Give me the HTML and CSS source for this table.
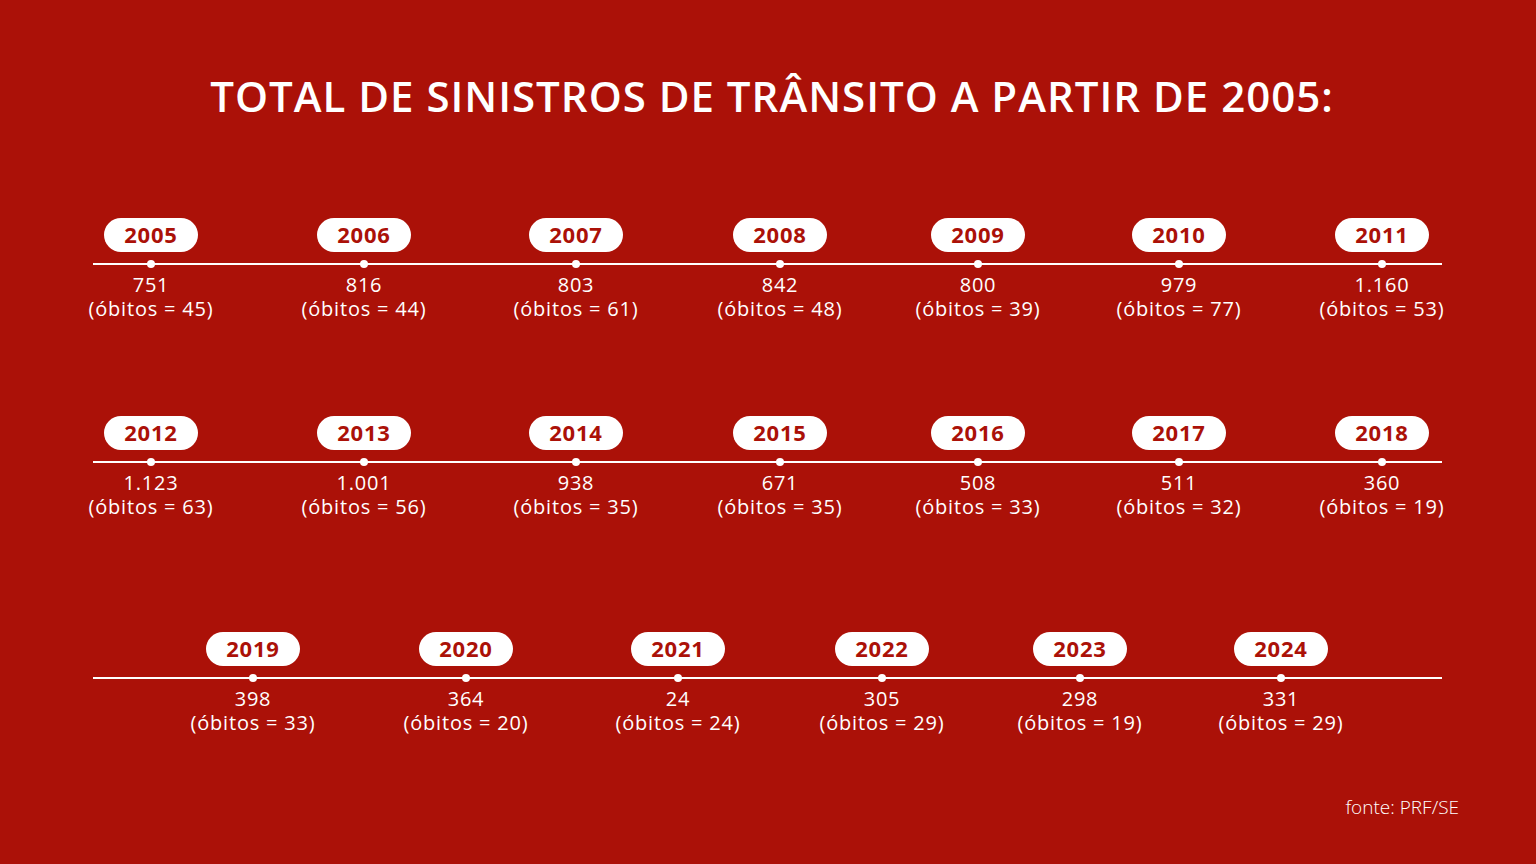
FILE: index.html
```html
<!DOCTYPE html>
<html lang="pt-BR">
<head>
<meta charset="utf-8">
<title>Total de sinistros de trânsito a partir de 2005</title>
<link rel="stylesheet" href="styles.css">
</head>
<body>
<main class="poster">
  <h1 class="title">TOTAL DE SINISTROS DE TRÂNSITO A PARTIR DE 2005:</h1>

  <section class="timeline row-a">
    <div class="item"><span class="pill">2005</span><span class="dot"></span><p class="val">751</p><p class="val">(óbitos = 45)</p></div>
    <div class="item"><span class="pill">2006</span><span class="dot"></span><p class="val">816</p><p class="val">(óbitos = 44)</p></div>
    <div class="item"><span class="pill">2007</span><span class="dot"></span><p class="val">803</p><p class="val">(óbitos = 61)</p></div>
    <div class="item"><span class="pill">2008</span><span class="dot"></span><p class="val">842</p><p class="val">(óbitos = 48)</p></div>
    <div class="item"><span class="pill">2009</span><span class="dot"></span><p class="val">800</p><p class="val">(óbitos = 39)</p></div>
    <div class="item"><span class="pill">2010</span><span class="dot"></span><p class="val">979</p><p class="val">(óbitos = 77)</p></div>
    <div class="item"><span class="pill">2011</span><span class="dot"></span><p class="val">1.160</p><p class="val">(óbitos = 53)</p></div>
  </section>

  <section class="timeline row-b">
    <div class="item"><span class="pill">2012</span><span class="dot"></span><p class="val">1.123</p><p class="val">(óbitos = 63)</p></div>
    <div class="item"><span class="pill">2013</span><span class="dot"></span><p class="val">1.001</p><p class="val">(óbitos = 56)</p></div>
    <div class="item"><span class="pill">2014</span><span class="dot"></span><p class="val">938</p><p class="val">(óbitos = 35)</p></div>
    <div class="item"><span class="pill">2015</span><span class="dot"></span><p class="val">671</p><p class="val">(óbitos = 35)</p></div>
    <div class="item"><span class="pill">2016</span><span class="dot"></span><p class="val">508</p><p class="val">(óbitos = 33)</p></div>
    <div class="item"><span class="pill">2017</span><span class="dot"></span><p class="val">511</p><p class="val">(óbitos = 32)</p></div>
    <div class="item"><span class="pill">2018</span><span class="dot"></span><p class="val">360</p><p class="val">(óbitos = 19)</p></div>
  </section>

  <section class="timeline row-c">
    <div class="item"><span class="pill">2019</span><span class="dot"></span><p class="val">398</p><p class="val">(óbitos = 33)</p></div>
    <div class="item"><span class="pill">2020</span><span class="dot"></span><p class="val">364</p><p class="val">(óbitos = 20)</p></div>
    <div class="item"><span class="pill">2021</span><span class="dot"></span><p class="val">24</p><p class="val">(óbitos = 24)</p></div>
    <div class="item"><span class="pill">2022</span><span class="dot"></span><p class="val">305</p><p class="val">(óbitos = 29)</p></div>
    <div class="item"><span class="pill">2023</span><span class="dot"></span><p class="val">298</p><p class="val">(óbitos = 19)</p></div>
    <div class="item"><span class="pill">2024</span><span class="dot"></span><p class="val">331</p><p class="val">(óbitos = 29)</p></div>
  </section>

  <p class="source">fonte: PRF/SE</p>
</main>
</body>
</html>
```

FILE: styles.css
```css
html, body {
  margin: 0;
  padding: 0;
}

body {
  background: #ab1108;
  color: #ffffff;
  font-family: "Open Sans", "DejaVu Sans", sans-serif;
}

.poster {
  width: 1536px;
  height: 864px;
  display: flex;
  flex-direction: column;
  overflow: hidden;
}

.title {
  margin: 71px 0 0 8px;
  text-align: center;
  font-size: 42px;
  line-height: 50px;
  font-weight: 600;
  letter-spacing: 1px;
}

.timeline {
  display: flex;
  background-image: linear-gradient(#ffffff, #ffffff);
  background-repeat: no-repeat;
  background-size: 1349px 2px;
  background-position: 93px 45px;
}

.row-a { margin-top: 97px; }
.row-b { margin-top: 95px; }
.row-c { margin-top: 113px; }

.item {
  width: 160px;
  flex: none;
  display: flex;
  flex-direction: column;
  align-items: center;
}

.item:nth-child(1) { margin-left: 71px; }
.item:nth-child(2) { margin-left: 53px; }
.item:nth-child(3) { margin-left: 52px; }
.item:nth-child(4) { margin-left: 44px; }
.item:nth-child(5) { margin-left: 38px; }
.item:nth-child(6) { margin-left: 41px; }
.item:nth-child(7) { margin-left: 43px; }

.row-c .item:nth-child(1) { margin-left: 173px; }

.pill {
  width: 94px;
  height: 34px;
  border-radius: 17px;
  background: #ffffff;
  color: #ab1108;
  font-weight: 700;
  font-size: 22px;
  line-height: 33px;
  letter-spacing: 0.8px;
  text-align: center;
}

.dot {
  width: 8px;
  height: 8px;
  margin-top: 8px;
  border-radius: 50%;
  background: #ffffff;
}

.val {
  margin: 0;
  font-size: 20px;
  line-height: 24px;
  font-weight: 400;
  letter-spacing: 0.8px;
  white-space: nowrap;
}

.item .dot + .val {
  margin-top: 5px;
}

.source {
  margin: 60px 77px 0 0;
  align-self: flex-end;
  font-size: 19px;
  line-height: 24px;
  font-weight: 300;
}
```
